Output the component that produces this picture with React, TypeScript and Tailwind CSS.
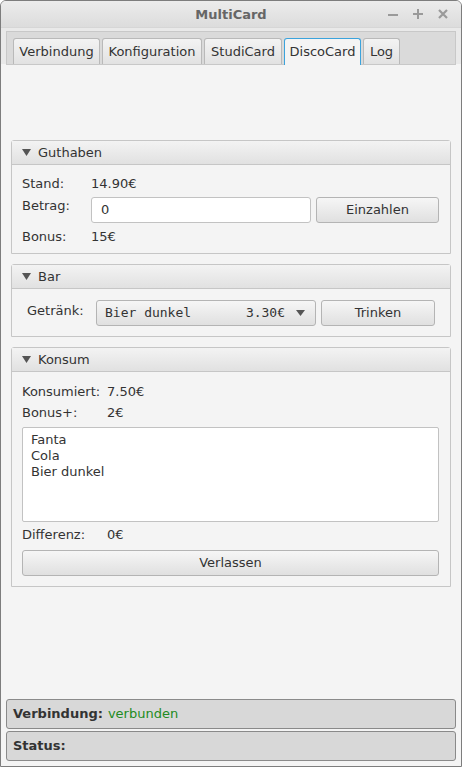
import React from "react";

const F = { fontFamily: '"DejaVu Sans", sans-serif' };
const MONO = { fontFamily: '"DejaVu Sans Mono", monospace' };

function Tab({ label, selected, w }: { label: string; selected?: boolean; w: string }) {
  return selected ? (
    <div className={"h-[27px] -mb-px flex items-center justify-center border border-b-0 border-[#3ba3dc] rounded-t-[3px] bg-[#f4f4f4] text-[#333] text-[13px] " + w}>
      {label}
    </div>
  ) : (
    <div className={"h-[26px] flex items-center justify-center border border-b-0 border-[#b9b9b9] rounded-t-[3px] bg-gradient-to-b from-[#f3f3f3] to-[#e2e2e2] text-[#333] text-[13px] " + w}>
      {label}
    </div>
  );
}

function Pane({ title, children }: { title: string; children: React.ReactNode }) {
  return (
    <div className="border border-[#c6c6c6] rounded-t-[3px]">
      <div className="h-[24px] flex items-center pl-[10px] gap-[7px] bg-gradient-to-b from-[#f3f3f3] to-[#e1e1e1] border-b border-[#c6c6c6] text-[13px] text-[#333]">
        <svg width="9" height="7" viewBox="0 0 9 7">
          <path d="M0 0 L9 0 L4.5 7 Z" fill="#555" />
        </svg>
        <span>{title}</span>
      </div>
      <div className="bg-[#f4f4f4]">{children}</div>
    </div>
  );
}

function Button({ label, className }: { label: string; className: string }) {
  return (
    <div
      className={
        "flex items-center justify-center border border-[#b4b4b4] rounded-[3px] bg-gradient-to-b from-[#f6f6f6] to-[#e0e0e0] text-[13px] text-[#333] " +
        className
      }
    >
      {label}
    </div>
  );
}

export default function App() {
  return (
    <div
      style={F}
      className="w-[462px] h-[767px] border border-[#7d7d7d] rounded-t-[6px] overflow-hidden flex flex-col bg-[#f4f4f4] text-[#333]"
    >
      {/* title bar */}
      <div className="h-[27px] relative flex items-center justify-center bg-gradient-to-b from-[#ececec] to-[#dcdcdc] border-b border-[#d6d6d6]">
        <span className="text-[13px] font-bold text-[#666] mt-[2px]">MultiCard</span>
        <div className="absolute right-[12px] top-[7px] flex items-center gap-[13px]">
          <svg width="12" height="12" viewBox="0 0 12 12">
            <rect x="1" y="6" width="10" height="2" fill="#9a9a9a" />
          </svg>
          <svg width="12" height="12" viewBox="0 0 12 12">
            <rect x="1" y="5" width="10" height="2" fill="#9a9a9a" />
            <rect x="5" y="1" width="2" height="10" fill="#9a9a9a" />
          </svg>
          <svg width="12" height="12" viewBox="0 0 12 12">
            <path d="M2 2 L10 10 M10 2 L2 10" stroke="#9a9a9a" strokeWidth="2.2" />
          </svg>
        </div>
      </div>
      {/* tab header */}
      <div className="bg-[#e9e9e9] pt-[3px] px-[5px]">
        <div className="h-[33px] bg-[#dadada] border border-b-0 border-[#c8c8c8] flex items-end gap-[2px] pl-[6px] relative">
          <Tab label="Verbindung" w="w-[87px]" />
          <Tab label="Konfiguration" w="w-[100px]" />
          <Tab label="StudiCard" w="w-[78px]" />
          <Tab label="DiscoCard" w="w-[77px]" selected />
          <Tab label="Log" w="w-[37px]" />
        </div>
      </div>
      <div className="h-px bg-[#c8c8c8] mx-[5px]" />

      {/* content */}
      <div className="flex-1 flex flex-col px-[10px] pt-[75px] gap-[10px]">
        <Pane title="Guthaben">
          <div className="pl-[10px] pr-[11px] pt-[10px] pb-[7px] flex flex-col text-[13px]">
            <div className="h-[18px] flex items-center">
              <span className="w-[69px]">Stand:</span>
              <span>14.90€</span>
            </div>
            <div className="h-[26px] mt-[4px] flex">
              <span className="w-[69px] leading-[18px]">Betrag:</span>
              <div className="w-[220px] h-[26px] bg-white border border-[#c2c2c2] rounded-[3px] flex items-center pl-[9px]">
                0
              </div>
              <Button label="Einzahlen" className="ml-[5px] w-[123px] h-[26px]" />
            </div>
            <div className="h-[18px] mt-[5px] flex items-center">
              <span className="w-[69px]">Bonus:</span>
              <span>15€</span>
            </div>
          </div>
        </Pane>

        <Pane title="Bar">
          <div className="pl-[15px] pt-[11px] pb-[10px] flex text-[13px]">
            <span className="w-[69px] leading-[22px]">Getränk:</span>
            <div className="w-[220px] h-[26px] border border-[#b4b4b4] rounded-[3px] bg-gradient-to-b from-[#f6f6f6] to-[#e0e0e0] flex items-center pl-[8px] pr-[10px]">
              <span style={MONO} className="whitespace-pre text-[13px] flex-1">
                {"Bier dunkel       3.30€"}
              </span>
              <svg width="9" height="6" viewBox="0 0 9 6">
                <path d="M0 0 L9 0 L4.5 6 Z" fill="#555" />
              </svg>
            </div>
            <Button label="Trinken" className="ml-[5px] w-[114px] h-[26px]" />
          </div>
        </Pane>

        <Pane title="Konsum">
          <div className="pl-[10px] pr-[11px] pt-[11px] pb-[10px] flex flex-col text-[13px]">
            <div className="h-[18px] flex items-center">
              <span className="w-[85px]">Konsumiert:</span>
              <span>7.50€</span>
            </div>
            <div className="h-[18px] mt-[3px] flex items-center">
              <span className="w-[85px]">Bonus+:</span>
              <span>2€</span>
            </div>
            <div className="mt-[5px] h-[95px] bg-white border border-[#c2c2c2] rounded-[2px] pl-[8px] pt-[4px] leading-[16px]">
              <div>Fanta</div>
              <div>Cola</div>
              <div>Bier dunkel</div>
            </div>
            <div className="h-[18px] mt-[4px] flex items-center">
              <span className="w-[85px]">Differenz:</span>
              <span>0€</span>
            </div>
            <Button label="Verlassen" className="mt-[6px] w-full h-[26px]" />
          </div>
        </Pane>
      </div>

      {/* status bars */}
      <div className="px-[5px] pb-[5px] flex flex-col gap-[2px] text-[13px]">
        <div className="h-[30px] bg-[#d8d8d8] border border-[#8a8a8a] rounded-[3px] flex items-center pl-[6px]">
          <span className="font-bold text-[#333]">Verbindung:</span>
          <span className="ml-[5px] text-[#228b22]">verbunden</span>
        </div>
        <div className="h-[30px] bg-[#d8d8d8] border border-[#8a8a8a] rounded-[3px] flex items-center pl-[6px]">
          <span className="font-bold text-[#333]">Status:</span>
        </div>
      </div>
    </div>
  );
}
